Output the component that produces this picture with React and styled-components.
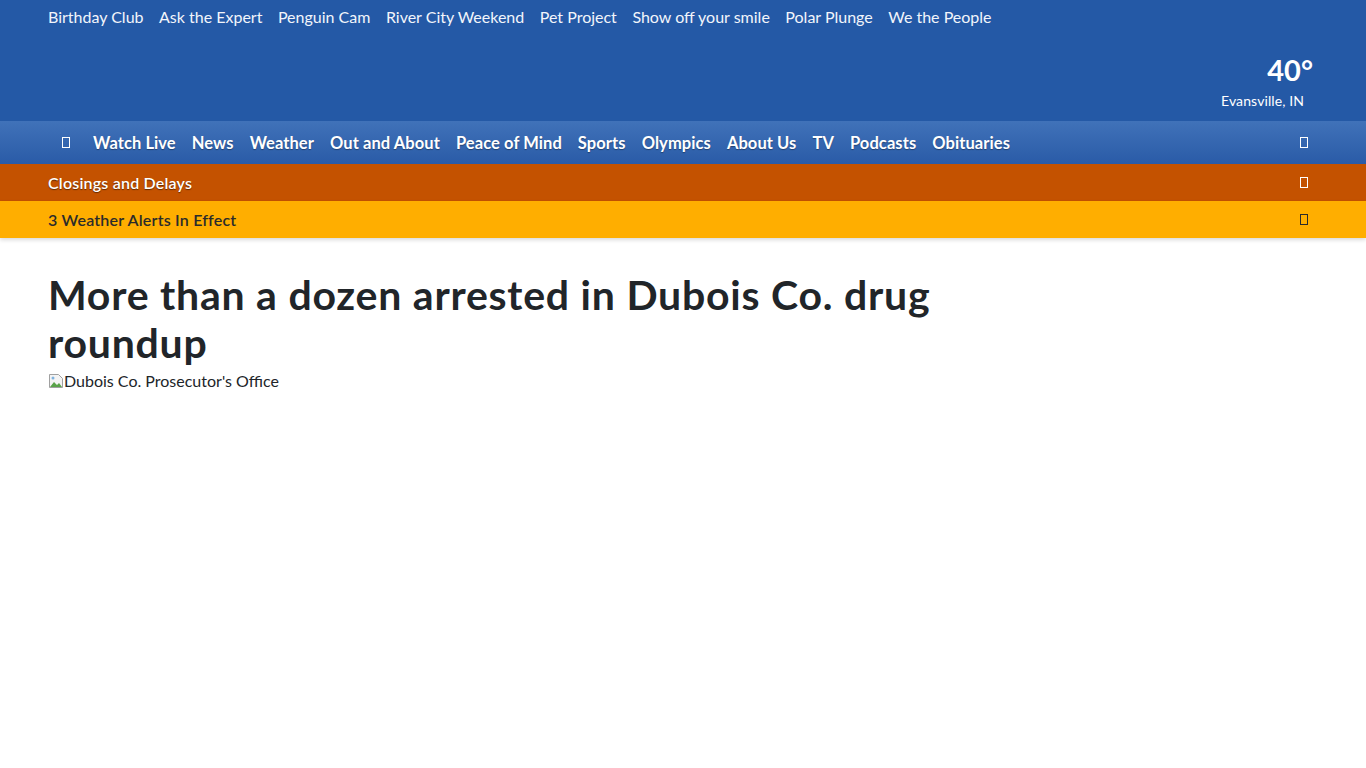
import React from 'react'
import styled, { createGlobalStyle } from 'styled-components'

const GlobalStyle = createGlobalStyle`
  body {
    margin: 0;
    font-family: "Segoe UI", Lato, "Noto Sans", sans-serif;
    background: #fff;
    color: #212529;
  }
  * { box-sizing: border-box; }
`

const Header = styled.header`
  background-color: #2459a6;
  height: 121px;
  padding: 0 48px;
  display: flex;
  flex-direction: column;
`

const TopLinks = styled.nav`
  display: flex;
  gap: 15.5px;
  height: 32px;
  align-items: center;

  a {
    color: #f2f5fb;
    font-size: 16px;
    text-decoration: none;
  }
`

const WeatherBox = styled.div`
  align-self: flex-end;
  display: flex;
  flex-direction: column;
  align-items: flex-end;
  margin-top: 20px;
  margin-right: 5px;
`

const Temp = styled.div`
  color: #fff;
  font-size: 29px;
  font-weight: 700;
  line-height: 36px;
  margin-right: 0;
`

const City = styled.div`
  color: #fff;
  font-size: 14px;
  line-height: 18px;
  margin-top: 4px;
  margin-right: 9px;
  letter-spacing: 0.1px;
`

const MainNav = styled.nav`
  height: 43px;
  background: linear-gradient(to bottom, #4072b9 0%, #2a5ba7 100%);
  display: flex;
  align-items: center;
  padding: 0 58px 0 62px;
`

const NavItems = styled.div`
  display: flex;
  align-items: center;
  gap: 16px;
  flex: 1;

  a {
    color: #fff;
    font-size: 16.5px;
    font-weight: 700;
    letter-spacing: 0.08px;
    text-decoration: none;
    text-shadow: 0 1px 1px rgba(0, 0, 0, 0.35);
  }
`

const Tofu = styled.span`
  display: inline-block;
  width: 8px;
  height: 11px;
  border: 1px solid ${p => p.$color || '#fff'};
  margin-right: ${p => p.$gap || 0}px;
`

const Bar = styled.div`
  height: 37px;
  background-color: ${p => p.$bg};
  color: ${p => p.$fg};
  display: flex;
  align-items: center;
  justify-content: space-between;
  padding: 0 58px 0 48px;
  font-size: 16px;
  font-weight: 600;
  letter-spacing: 0.2px;
  text-shadow: ${p => (p.$shadow ? '0 1px 1px rgba(0,0,0,0.5)' : 'none')};
  box-shadow: ${p => (p.$drop ? '0 2px 4px rgba(0,0,0,0.15)' : 'none')};
  position: relative;
`

const Article = styled.main`
  padding: 33px 48px 0;
  max-width: 1000px;
`

const Headline = styled.h1`
  margin: 0;
  font-size: 41px;
  font-weight: 700;
  line-height: 48px;
  letter-spacing: 0.76px;
  color: #212529;
`

const BrokenImage = styled.div`
  display: flex;
  align-items: center;
  font-size: 16px;
  color: #212529;
  margin-top: 4px;
`

const ImgIcon = styled.svg`
  width: 16px;
  height: 16px;
  flex: none;
`

const topLinks = [
  'Birthday Club',
  'Ask the Expert',
  'Penguin Cam',
  'River City Weekend',
  'Pet Project',
  'Show off your smile',
  'Polar Plunge',
  'We the People',
]

const navLinks = [
  'Watch Live',
  'News',
  'Weather',
  'Out and About',
  'Peace of Mind',
  'Sports',
  'Olympics',
  'About Us',
  'TV',
  'Podcasts',
  'Obituaries',
]

export default function App() {
  return (
    <>
      <GlobalStyle />
      <Header>
        <TopLinks>
          {topLinks.map(l => (
            <a key={l} href="#">{l}</a>
          ))}
        </TopLinks>
        <WeatherBox>
          <Temp>40°</Temp>
          <City>Evansville, IN</City>
        </WeatherBox>
      </Header>
      <MainNav>
        <NavItems>
          <Tofu $gap={7} />
          {navLinks.map(l => (
            <a key={l} href="#">{l}</a>
          ))}
        </NavItems>
        <Tofu />
      </MainNav>
      <Bar $bg="#c45200" $fg="#fff" $shadow>
        <span>Closings and Delays</span>
        <Tofu />
      </Bar>
      <Bar $bg="#ffae00" $fg="#2b2b2b" $drop>
        <span>3 Weather Alerts In Effect</span>
        <Tofu $color="#2b2b2b" />
      </Bar>
      <Article>
        <Headline>More than a dozen arrested in Dubois Co. drug roundup</Headline>
        <BrokenImage>
          <ImgIcon viewBox="0 0 16 16">
            <path d="M1.5 1.5h9l4 4v9h-13z" fill="#f4f4f4" stroke="#a0a0a0" />
            <path d="M2 14l4-5 3 3 2-2 3 4z" fill="#5aa34a" />
            <circle cx="5" cy="5" r="1.5" fill="#7fb3e0" />
          </ImgIcon>
          Dubois Co. Prosecutor's Office
        </BrokenImage>
      </Article>
    </>
  )
}
